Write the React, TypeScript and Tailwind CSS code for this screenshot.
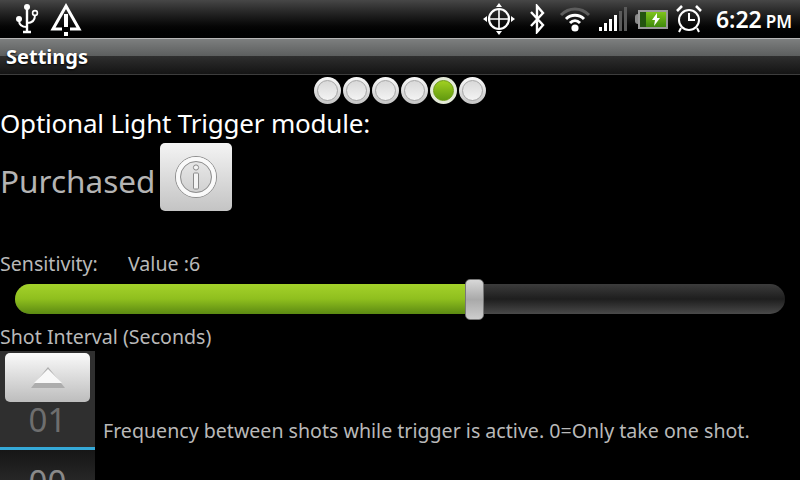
const font = { fontFamily: '"Noto Sans", "Open Sans", sans-serif' };

function UsbIcon() {
  return (
    <svg width="26" height="34" viewBox="0 0 26 34" fill="none" stroke="white" strokeWidth="2">
      <circle cx="13" cy="5" r="3" fill="white" stroke="none" />
      <path d="M13 6V29M9 30H17" strokeWidth="2.4" />
      <path d="M13 25C7 25 5 22 5 18" />
      <circle cx="5" cy="17" r="3" fill="white" stroke="none" />
      <path d="M13 21C18 21 21 19 21 13" />
      <circle cx="21" cy="11" r="2.4" strokeWidth="1.6" />
    </svg>
  );
}

function WarningIcon() {
  return (
    <svg width="32" height="34" viewBox="0 0 32 34" fill="none">
      <path d="M16 4L29 27H3Z" stroke="white" strokeWidth="3" />
      <rect x="12" y="23" width="8" height="6" fill="black" />
      <rect x="14" y="12" width="4" height="13" fill="white" />
      <rect x="14" y="30" width="4" height="4" fill="white" />
    </svg>
  );
}

function GpsIcon() {
  return (
    <svg width="32" height="32" viewBox="0 0 32 32" fill="none" stroke="white">
      <circle cx="16" cy="16" r="10" strokeWidth="2.2" />
      <path d="M16 6V26M6 16H26" strokeWidth="1.6" />
      <path d="M16 0L19 4H13ZM16 32L13 28H19ZM0 16L4 13V19ZM32 16L28 19V13Z" fill="white" stroke="none" />
    </svg>
  );
}

function BluetoothIcon() {
  return (
    <svg width="16" height="30" viewBox="0 0 16 30" fill="none" stroke="white" strokeWidth="2.4">
      <path d="M2 8L14 21L8 28V2L14 9L2 22" />
    </svg>
  );
}

function WifiIcon() {
  return (
    <svg width="32" height="26" viewBox="0 0 32 26" fill="none" strokeWidth="3">
      <path d="M2 9C10 1 22 1 30 9" stroke="#5d5d5d" />
      <path d="M7 13C12 8 20 8 25 13" stroke="white" />
      <path d="M11 17C14 14 18 14 21 17" stroke="white" />
      <circle cx="16" cy="22" r="3.6" fill="white" />
    </svg>
  );
}

function SignalBars() {
  const bars = [
    { h: "h-[4px]", c: "bg-white" },
    { h: "h-[8px]", c: "bg-white" },
    { h: "h-[12px]", c: "bg-white" },
    { h: "h-[16px]", c: "bg-white" },
    { h: "h-[20px]", c: "bg-[#5a5a5a]" },
    { h: "h-[24px]", c: "bg-[#5a5a5a]" },
  ];
  return (
    <div className="flex items-end gap-[2px] h-[24px]">
      {bars.map((b, i) => (
        <div key={i} className={`w-[3px] ${b.h} ${b.c}`} />
      ))}
    </div>
  );
}

function Battery() {
  return (
    <div className="flex items-center">
      <div className="w-[3px] h-[10px] bg-[#8a8a8a] rounded-l-sm" />
      <div className="w-[30px] h-[19px] border-2 border-[#9a9a9a] bg-black flex">
        <div className="w-[6px] h-full bg-[#245410]" />
        <div className="flex-1 bg-gradient-to-b from-[#7fc41c] to-[#3f8a0c] flex items-center justify-center">
          <svg width="10" height="13" viewBox="0 0 10 13" fill="white">
            <path d="M6 0L1 7H4L3 13L9 5H6Z" />
          </svg>
        </div>
      </div>
    </div>
  );
}

function AlarmIcon() {
  return (
    <svg width="26" height="28" viewBox="0 0 26 28" fill="none" stroke="white" strokeWidth="2">
      <circle cx="13" cy="15" r="10" />
      <path d="M13 8V15H19" />
      <path d="M1 6L6 1M25 6L20 1" strokeWidth="2.6" />
      <path d="M5 23L3 27M21 23L23 27" />
    </svg>
  );
}

function PageDot({ active }: { active?: boolean }) {
  if (active) {
    return (
      <div className="w-[27px] h-[27px] rounded-full bg-[#e4ead8] flex items-center justify-center">
        <div className="w-[21px] h-[21px] rounded-full bg-gradient-to-b from-[#a0d020] to-[#629a10] border border-[#6d9a14]" />
      </div>
    );
  }
  return (
    <div className="w-[27px] h-[27px] rounded-full bg-gradient-to-b from-[#fafafa] to-[#c4c4c4] flex items-center justify-center">
      <div className="w-[21px] h-[21px] rounded-full border border-[#a5a5a5] bg-gradient-to-b from-[#d8d8d8] to-[#f4f4f4]" />
    </div>
  );
}

export default function App() {
  return (
    <div className="w-[800px] h-[480px] bg-black overflow-hidden flex flex-col" style={font}>
      {/* status bar */}
      <div className="h-[38px] shrink-0 bg-gradient-to-b from-[#474747] to-black flex items-center justify-between pl-[14px] pr-[8px]">
        <div className="flex items-center gap-[10px]">
          <UsbIcon />
          <WarningIcon />
        </div>
        <div className="flex items-center">
          <GpsIcon />
          <div className="ml-[14px]">
            <BluetoothIcon />
          </div>
          <div className="ml-[14px]">
            <WifiIcon />
          </div>
          <div className="ml-[8px]">
            <SignalBars />
          </div>
          <div className="ml-[8px]">
            <Battery />
          </div>
          <div className="ml-[8px]">
            <AlarmIcon />
          </div>
          <div className="ml-[14px] flex items-baseline gap-[4px] text-white font-semibold leading-none whitespace-nowrap">
            <span className="text-[23px]">6:22</span>
            <span className="text-[17px]">PM</span>
          </div>
        </div>
      </div>

      {/* title bar */}
      <div className="h-[37px] shrink-0 border-t border-t-[#b5b5b5] border-b border-b-[#3d3d3d] flex flex-col relative">
        <div className="h-[17px] bg-gradient-to-b from-[#7d7f7f] to-[#5c5e5e]" />
        <div className="flex-1 bg-gradient-to-b from-[#2f2f2f] to-[#141414]" />
        <div className="absolute left-[6px] top-0 bottom-0 flex items-center text-white font-bold text-[20px] leading-none [text-shadow:0_1px_2px_#000]">
          Settings
        </div>
      </div>

      {/* pager dots */}
      <div className="flex justify-center gap-[2px] mt-[2px] ml-[-1px]">
        <PageDot />
        <PageDot />
        <PageDot />
        <PageDot />
        <PageDot active />
        <PageDot />
      </div>

      <div className="text-white text-[26px] tracking-[-0.2px] leading-[36px] mt-[1px] whitespace-nowrap">
        Optional Light Trigger module:
      </div>

      <div className="flex items-center mt-[2px]">
        <span className="text-[#b4b4b4] text-[31.5px] leading-none whitespace-nowrap w-[160px] pt-[7px]">Purchased</span>
        <div className="w-[72px] h-[68px] rounded-[5px] bg-gradient-to-b from-[#f4f4f4] to-[#c4c4c4] flex items-center justify-center">
          <svg width="44" height="44" viewBox="0 0 44 44" fill="none">
            <circle cx="22" cy="22" r="20.5" stroke="#8f8f8f" strokeWidth="1" />
            <circle cx="22" cy="22" r="18" stroke="#fafafa" strokeWidth="4" />
            <circle cx="22" cy="22" r="15.5" stroke="#8f8f8f" strokeWidth="1" />
            <circle cx="22" cy="12.5" r="2.6" fill="#f4f4f4" stroke="#8a8a8a" />
            <rect x="19.5" y="18" width="5" height="16" rx="1" fill="#f4f4f4" stroke="#8a8a8a" />
          </svg>
        </div>
      </div>

      <div className="flex mt-[39px] text-[#b9b9b9] text-[19.6px] leading-[27px] whitespace-nowrap">
        <span className="w-[128px]">Sensitivity:</span>
        <span>Value :6</span>
      </div>

      {/* slider */}
      <div className="relative mx-[15px] mt-[6px] h-[31px] flex items-center">
        <div className="w-full h-[30px] rounded-full overflow-hidden flex bg-gradient-to-b from-[#3c3c3c] via-[#1e1e1e] to-[#4a4a4a]">
          <div className="w-[455px] h-full bg-gradient-to-b from-[#a4d22a] via-[#8fbf1e] to-[#5c8a12]" />
        </div>
        <div className="absolute left-[450px] top-[-4px] w-[19px] h-[41px] rounded-[5px] border border-[#777] bg-gradient-to-b from-[#d8d8d8] via-[#a9a9a9] to-[#cdcdcd]" />
      </div>

      <div className="text-[#b9b9b9] text-[19.6px] leading-[27px] mt-[9px] whitespace-nowrap">
        Shot Interval (Seconds)
      </div>

      {/* number picker */}
      <div className="flex flex-1 min-h-0 mt-[1px]">
        <div className="w-[95px] h-[129px] shrink-0 bg-[#2f2f2f] overflow-hidden flex flex-col">
          <div className="mx-[5px] mt-[2px] h-[49px] shrink-0 rounded-[5px] bg-gradient-to-b from-[#fafafa] to-[#bdbdbd] flex items-center justify-center">
            <svg width="36" height="24" viewBox="0 0 36 24">
              <path d="M18 1L35 22H1Z" fill="#adadad" />
              <path d="M18 3L32 17H4Z" fill="#f8f8f8" />
            </svg>
          </div>
          <div className="text-[#6e6e6e] text-[33px] leading-[40px] text-center h-[45px] shrink-0 -mt-[2px] mb-[2px]">01</div>
          <div className="h-[3px] shrink-0 bg-[#35a9d8]" />
          <div className="flex-1 bg-gradient-to-b from-[#161616] to-[#333] text-[#8a8a8a] text-[33px] leading-[40px] text-center pt-[12px]">
            00
          </div>
        </div>
        <div className="flex-1 pl-[8px] pt-[66px] text-[#b9b9b9] text-[19.6px] leading-[27px] whitespace-nowrap">
          Frequency between shots while trigger is active. 0=Only take one shot.
        </div>
      </div>
    </div>
  );
}
